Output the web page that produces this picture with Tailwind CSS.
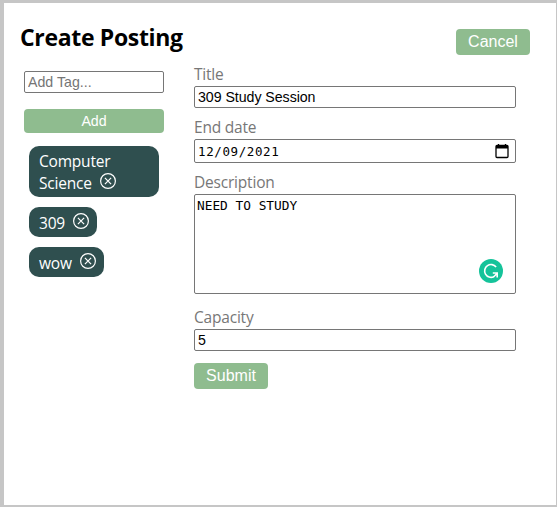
<!DOCTYPE html>
<html lang="en">
<head>
<meta charset="utf-8">
<title>Create Posting</title>
<script src="https://cdn.jsdelivr.net/npm/@tailwindcss/browser@4"></script>
</head>
<body class="h-[507px] w-[557px] overflow-hidden bg-[#c6c6c6] pt-[3px] pl-1 font-['Open_Sans','Noto_Sans',sans-serif]">
<main class="h-[502px] w-[552px] bg-white">
  <header class="flex h-[62px] items-start justify-between pr-[26px] pl-4">
    <h1 class="pt-[18px] text-[23px] leading-8 font-bold tracking-[-0.33px] whitespace-nowrap text-black">Create Posting</h1>
    <button class="mt-[26px] h-[26px] w-[74px] rounded bg-[#8fbc8f] font-['Liberation_Sans',sans-serif] text-base leading-[26px] text-white">Cancel</button>
  </header>
  <div class="flex">
    <aside class="w-[190px] pt-[6px] pl-5">
      <input type="text" placeholder="Add Tag..." class="block h-[22px] w-[140px] rounded-xs border border-[#767676] px-[3px] font-['Liberation_Sans',sans-serif] text-[14.2px] placeholder:text-[#757575]">
      <button class="mt-4 block h-6 w-[140px] rounded bg-[#8fbc8f] font-['Liberation_Sans',sans-serif] text-[14.2px] leading-6 text-white">Add</button>
      <ul class="mt-[13px] ml-[5px] flex flex-col items-start gap-[10px] text-[15.5px] leading-[22px] tracking-[-0.2px] text-white">
        <li class="h-[51px] w-[130px] rounded-[10px] bg-[#2f4f4f] px-[10px] pt-1">
          <div>Computer</div>
          <div class="flex gap-2"><span class="w-[53px]">Science</span>
            <svg class="mt-px size-4" viewBox="0 0 16 16" fill="none" stroke="currentColor" stroke-width="1.2"><circle cx="8" cy="8" r="7.4"/><path d="M4.9 4.9l6.2 6.2M11.1 4.9l-6.2 6.2"/></svg>
          </div>
        </li>
        <li class="flex h-[30px] w-[68px] gap-2 rounded-[10px] bg-[#2f4f4f] pt-[5px] pl-[10px]"><span class="w-[26px]">309</span>
          <svg class="mt-px size-4" viewBox="0 0 16 16" fill="none" stroke="currentColor" stroke-width="1.2"><circle cx="8" cy="8" r="7.4"/><path d="M4.9 4.9l6.2 6.2M11.1 4.9l-6.2 6.2"/></svg>
        </li>
        <li class="flex h-[30px] w-[75px] gap-2 rounded-[10px] bg-[#2f4f4f] pt-[5px] pl-[10px]"><span class="w-[33px]">wow</span>
          <svg class="mt-px size-4" viewBox="0 0 16 16" fill="none" stroke="currentColor" stroke-width="1.2"><circle cx="8" cy="8" r="7.4"/><path d="M4.9 4.9l6.2 6.2M11.1 4.9l-6.2 6.2"/></svg>
        </li>
      </ul>
    </aside>
    <form class="w-[322px] text-[15.5px] leading-[19px] tracking-[-0.2px] text-[#777]">
      <label class="block h-[21px]" for="title">Title</label>
      <input id="title" type="text" value="309 Study Session" class="block h-[22px] w-full rounded-xs border border-[#767676] px-[3px] font-['Liberation_Sans',sans-serif] text-[14.2px] tracking-[-0.05px] text-black">
      <label class="mt-[10px] block h-[21px]">End date</label>
      <div class="flex h-6 items-center justify-between rounded-xs border border-[#767676] pr-[5px] pl-[3px] font-['DejaVu_Sans_Mono',monospace] text-[12.5px] tracking-[0.6px] text-black">
        <span>12/09/2021</span>
        <svg class="size-4" viewBox="0 0 16 16" fill="none" stroke="#000" stroke-width="1.3"><rect x="2" y="2.5" width="12" height="12" rx="1"/><path d="M2 3h12v2.5H2z" fill="#000" stroke="none"/><path d="M4.5 1v2M11.5 1v2"/></svg>
      </div>
      <label class="mt-[10px] block h-[21px]" for="description">Description</label>
      <div class="relative h-[100px]">
        <textarea id="description" class="block size-full resize-none rounded-xs border border-[#767676] p-[2px] font-['DejaVu_Sans_Mono',monospace] text-[12.8px] leading-[17px] tracking-normal text-black">NEED TO STUDY</textarea>
        <svg class="absolute right-[13px] bottom-[11px] size-6" viewBox="0 0 24 24" fill="none"><circle cx="12" cy="12" r="12" fill="#15c39a"/><path d="M17.1 8A6.4 6.4 0 1 0 14.8 17.7L18.2 14.2M13.8 14H18.2V18.5" stroke="#fff" stroke-width="1.6"/></svg>
      </div>
      <label class="mt-[14px] block h-[21px]" for="capacity">Capacity</label>
      <input id="capacity" type="text" value="5" class="block h-[22px] w-full rounded-xs border border-[#767676] px-[3px] font-['Liberation_Sans',sans-serif] text-[14.2px] text-black">
      <button type="button" class="mt-3 block h-[26px] w-[74px] rounded bg-[#8fbc8f] font-['Liberation_Sans',sans-serif] text-base leading-[26px] tracking-normal text-white">Submit</button>
    </form>
  </div>
</main>
</body>
</html>
